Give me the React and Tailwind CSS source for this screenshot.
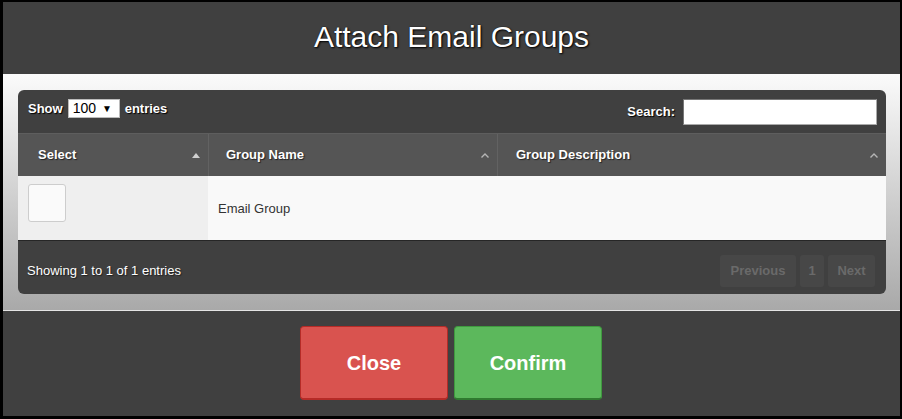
const font = { fontFamily: '"Liberation Sans", Arial, sans-serif' };

function SortUp({ filled }) {
  if (filled) {
    return (
      <svg width="8" height="5" viewBox="0 0 8 5" className="shrink-0">
        <path d="M0 5 L4 0 L8 5 Z" fill="#cfcfcf" />
      </svg>
    );
  }
  return (
    <svg width="8" height="5" viewBox="0 0 8 5" className="shrink-0">
      <path d="M0.5 4.5 L4 1 L7.5 4.5" fill="none" stroke="#b5b5b5" strokeWidth="1.4" />
    </svg>
  );
}

export default function App() {
  const heads = [
    { label: 'Select', w: 'w-[190px] pl-[20px]', filled: true },
    { label: 'Group Name', w: 'w-[289px] pl-[17px]', filled: false },
    { label: 'Group Description', w: 'flex-1 pl-[18px]', filled: false },
  ];

  return (
    <div
      className="w-[902px] h-[419px] bg-black pt-[2px] pl-[3px] pr-[2px] pb-[3px] flex flex-col"
      style={font}
    >
      {/* title bar */}
      <div className="h-[72px] bg-[#404040] flex items-center justify-center pb-[2px]">
        <h1 className="text-[30px] text-white leading-none [text-shadow:1px_1px_2px_#000,0_0_1px_#000]">
          Attach Email Groups
        </h1>
      </div>

      {/* body */}
      <div className="h-[236px] bg-gradient-to-b from-[#fbfbfb] to-[#a9a9a9] pt-[16px] pl-[15px] pr-[14px]">
        <div className="h-[204px] bg-[#404040] rounded-[6px] flex flex-col overflow-hidden">
          {/* controls */}
          <div className="h-[43px] flex justify-between pl-[10px] pr-[9px]">
            <div className="flex items-center gap-[5px] h-[19px] mt-[9px] text-[13px] font-bold text-white [text-shadow:1px_1px_1px_#000]">
              <span>Show</span>
              <div className="w-[52px] h-[19px] bg-white border border-[#bbb] flex items-center px-[4px] gap-[6px] text-black font-normal [text-shadow:none] text-[14px]">
                <span>100</span>
                <span className="text-[10px]">▼</span>
              </div>
              <span>entries</span>
            </div>
            <div className="flex items-center gap-[8px] mt-[9px] h-[26px] text-[13px] font-bold text-white [text-shadow:1px_1px_1px_#000]">
              <span>Search:</span>
              <div className="w-[194px] h-[26px] bg-white border border-[#aaa] border-t-[#777] border-l-[#777]" />
            </div>
          </div>

          {/* header row */}
          <div className="h-[43px] bg-[#555555] border-t border-[#5e5e5e] flex">
            {heads.map((h, i) => (
              <div
                key={h.label}
                className={`${h.w} flex items-center justify-between pr-[8px] text-[13px] font-bold text-white [text-shadow:1px_1px_1px_#222] ${i > 0 ? 'border-l border-[#626262]' : ''}`}
              >
                <span>{h.label}</span>
                <SortUp filled={h.filled} />
              </div>
            ))}
          </div>

          {/* data row */}
          <div className="h-[65px] flex border-b border-[#262626]">
            <div className="w-[190px] bg-[#efefef] pl-[10px] pt-[8px]">
              <div className="w-[38px] h-[38px] bg-[#fafafa] border border-[#cdcdcd] rounded-[3px]" />
            </div>
            <div className="flex-1 bg-[#f9f9f9] flex items-center pl-[10px] text-[13px] text-[#333] pt-[2px]">
              Email Group
            </div>
          </div>

          {/* table footer */}
          <div className="flex-1 flex items-center justify-between pl-[9px] pr-[11px] pt-[6px]">
            <span className="text-[13px] text-white [text-shadow:1px_1px_1px_#222]">
              Showing 1 to 1 of 1 entries
            </span>
            <div className="flex gap-[4px] text-[13px] font-bold text-[#6a6a6a]">
              <div className="w-[76px] h-[32px] rounded-[3px] bg-[#474747] flex items-center justify-center">Previous</div>
              <div className="w-[24px] h-[32px] rounded-[3px] bg-[#474747] flex items-center justify-center">1</div>
              <div className="w-[47px] h-[32px] rounded-[3px] bg-[#474747] flex items-center justify-center">Next</div>
            </div>
          </div>
        </div>
      </div>

      <div className="h-[1px] bg-[#e4e4e4]" />

      {/* actions */}
      <div className="flex-1 bg-[#404040] flex justify-center gap-[6px] pt-[15px] pr-[1px]">
        <button className="w-[148px] h-[74px] rounded-[4px] bg-[#d9534f] border border-[#b52b27] border-b-2 text-white font-bold text-[20px]">
          Close
        </button>
        <button className="w-[148px] h-[74px] rounded-[4px] bg-[#5cb85c] border border-[#3f9a3f] border-b-2 border-b-[#2f7a2f] text-white font-bold text-[20px]">
          Confirm
        </button>
      </div>
    </div>
  );
}
